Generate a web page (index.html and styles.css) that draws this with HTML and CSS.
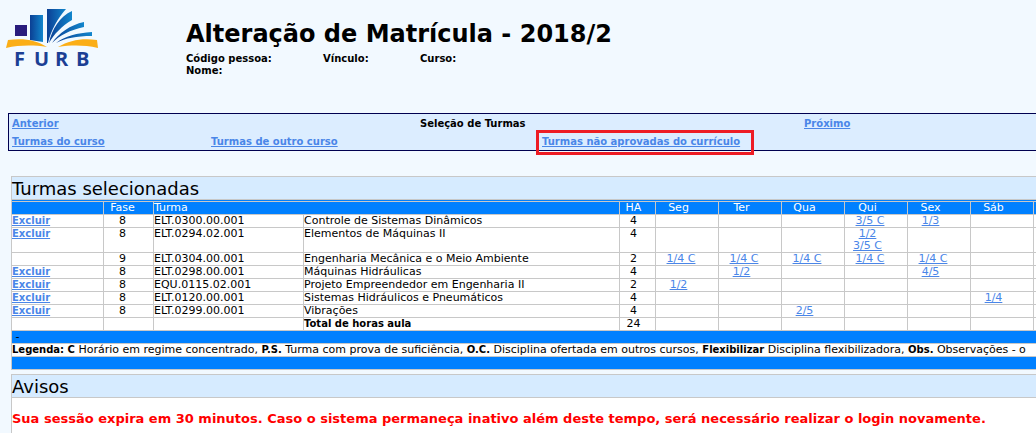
FILE: index.html
```html
<!DOCTYPE html>
<html lang="pt-BR">
<head>
    <meta charset="UTF-8">
    <meta name="viewport" content="width=device-width, initial-scale=1.0">
    <title>Alteração de Matrícula</title>
    <link rel="stylesheet" href="styles.css">
</head>
<body>
    <header class="header">
        <svg class="logo" viewBox="0 0 96 60" role="img" aria-label="FURB">
            <defs>
                <linearGradient id="azul" x1="0" y1="0" x2="1" y2="0">
                    <stop offset="0" stop-color="#0b3f94"/>
                    <stop offset="1" stop-color="#1286cc"/>
                </linearGradient>
            </defs>
            <path d="M9 17h12v11H9z" fill="#291c7c"/>
            <path d="M24 7h13v27l-13-2z" fill="url(#azul)"/>
            <path d="M41 1h19C52 10 45 22 42 35h-1z" fill="url(#azul)"/>
            <path d="M43 35C46 21 54 8 66 3v9C56 18 48 26 43 35z" fill="url(#azul)"/>
            <path d="M46 35C53 25 64 17 78 14v5C64 22 54 27 46 35z" fill="url(#azul)"/>
            <path d="M50 35C59 28 71 25 86 24v4C70 28 60 30 50 35z" fill="url(#azul)"/>
            <path d="M2 32C18 30 30 32 41 39C27 37 14 37 0 40z" fill="#fbae17"/>
            <path d="M52 39C64 32 76 30 91 32l1 8C78 37 66 37 52 39z" fill="#fbae17"/>
            <g class="logo-text">
                <text x="8" y="58">F</text>
                <text x="28" y="58">U</text>
                <text x="49" y="58">R</text>
                <text x="70" y="58">B</text>
            </g>
        </svg>
        <div class="info">
            <h1>Alteração de Matrícula - 2018/2</h1>
            <div class="info-row">
                <span class="codigo">Código pessoa:</span>
                <span class="vinculo">Vínculo:</span>
                <span>Curso:</span>
            </div>
            <div>Nome:</div>
        </div>
    </header>

    <nav class="menu">
        <div class="menu-row steps">
            <a href="#">Anterior</a>
            <span>Seleção de Turmas</span>
            <a href="#">Próximo</a>
        </div>
        <div class="menu-row options">
            <a href="#">Turmas do curso</a>
            <a href="#">Turmas de outro curso</a>
            <a href="#" class="highlight">Turmas não aprovadas do currículo</a>
        </div>
    </nav>

    <main>
        <section class="box">
            <h2>Turmas selecionadas</h2>
            <table class="turmas">
                <colgroup>
                    <col class="col-acao">
                    <col class="col-fase">
                    <col class="col-turma">
                    <col>
                    <col class="col-ha">
                    <col class="col-dia" span="7">
                </colgroup>
                <thead>
                    <tr>
                        <th></th>
                        <th class="fase">Fase</th>
                        <th colspan="2">Turma</th>
                        <th class="ha">HA</th>
                        <th class="dia">Seg</th>
                        <th class="dia">Ter</th>
                        <th class="dia">Qua</th>
                        <th class="dia">Qui</th>
                        <th class="dia">Sex</th>
                        <th class="dia">Sáb</th>
                        <th></th>
                    </tr>
                </thead>
                <tbody>
                    <tr>
                        <td><a href="#" class="excluir">Excluir</a></td>
                        <td class="fase">8</td>
                        <td>ELT.0300.00.001</td>
                        <td>Controle de Sistemas Dinâmicos</td>
                        <td class="ha">4</td>
                        <td></td><td></td><td></td>
                        <td class="dia conc"><a href="#">3/5 C</a></td>
                        <td class="dia"><a href="#">1/3</a></td>
                        <td></td><td></td>
                    </tr>
                    <tr>
                        <td><a href="#" class="excluir">Excluir</a></td>
                        <td class="fase">8</td>
                        <td>ELT.0294.02.001</td>
                        <td>Elementos de Máquinas II</td>
                        <td class="ha">4</td>
                        <td></td><td></td><td></td>
                        <td class="dia"><a href="#">1/2</a><br><a href="#">3/5 C</a></td>
                        <td></td><td></td><td></td>
                    </tr>
                    <tr>
                        <td></td>
                        <td class="fase">9</td>
                        <td>ELT.0304.00.001</td>
                        <td>Engenharia Mecânica e o Meio Ambiente</td>
                        <td class="ha">2</td>
                        <td class="dia conc"><a href="#">1/4 C</a></td>
                        <td class="dia conc"><a href="#">1/4 C</a></td>
                        <td class="dia conc"><a href="#">1/4 C</a></td>
                        <td class="dia conc"><a href="#">1/4 C</a></td>
                        <td class="dia conc"><a href="#">1/4 C</a></td>
                        <td></td><td></td>
                    </tr>
                    <tr>
                        <td><a href="#" class="excluir">Excluir</a></td>
                        <td class="fase">8</td>
                        <td>ELT.0298.00.001</td>
                        <td>Máquinas Hidráulicas</td>
                        <td class="ha">4</td>
                        <td></td>
                        <td class="dia"><a href="#">1/2</a></td>
                        <td></td><td></td>
                        <td class="dia"><a href="#">4/5</a></td>
                        <td></td><td></td>
                    </tr>
                    <tr>
                        <td><a href="#" class="excluir">Excluir</a></td>
                        <td class="fase">8</td>
                        <td>EQU.0115.02.001</td>
                        <td>Projeto Empreendedor em Engenharia II</td>
                        <td class="ha">2</td>
                        <td class="dia"><a href="#">1/2</a></td>
                        <td></td><td></td><td></td><td></td><td></td><td></td>
                    </tr>
                    <tr>
                        <td><a href="#" class="excluir">Excluir</a></td>
                        <td class="fase">8</td>
                        <td>ELT.0120.00.001</td>
                        <td>Sistemas Hidráulicos e Pneumáticos</td>
                        <td class="ha">4</td>
                        <td></td><td></td><td></td><td></td><td></td>
                        <td class="dia"><a href="#">1/4</a></td>
                        <td></td>
                    </tr>
                    <tr>
                        <td><a href="#" class="excluir">Excluir</a></td>
                        <td class="fase">8</td>
                        <td>ELT.0299.00.001</td>
                        <td>Vibrações</td>
                        <td class="ha">4</td>
                        <td></td><td></td>
                        <td class="dia"><a href="#">2/5</a></td>
                        <td></td><td></td><td></td><td></td>
                    </tr>
                    <tr>
                        <td></td><td></td><td></td>
                        <td><b>Total de horas aula</b></td>
                        <td class="ha">24</td>
                        <td></td><td></td><td></td><td></td><td></td><td></td><td></td>
                    </tr>
                    <tr class="faixa"><td colspan="12">&nbsp;-</td></tr>
                    <tr><td colspan="12"><b>Legenda: C</b> Horário em regime concentrado, <b>P.S.</b> Turma com prova de suficiência, <b>O.C.</b> Disciplina ofertada em outros cursos, <b>Flexibilizar</b> Disciplina flexibilizadora, <b>Obs.</b> Observações - o</td></tr>
                    <tr class="faixa"><td colspan="12"></td></tr>
                </tbody>
            </table>
        </section>

        <section class="box avisos">
            <h2>Avisos</h2>
            <p>Sua sessão expira em 30 minutos. Caso o sistema permaneça inativo além deste tempo, será necessário realizar o login novamente.</p>
        </section>
    </main>
</body>
</html>
```
FILE: styles.css
```css
* {
    margin: 0;
    padding: 0;
    box-sizing: border-box;
}

body {
    min-height: 100vh;
    display: flex;
    flex-direction: column;
    background-color: #f2f9ff;
    color: #000;
    font-family: Verdana, "DejaVu Sans", sans-serif;
    font-size: 10px;
    line-height: 12px;
    overflow: hidden;
}

a {
    color: #4a86e8;
}

.header {
    display: flex;
    gap: 84px;
    height: 113px;
    padding: 8px 6px;
    font-weight: bold;
}

.logo {
    width: 96px;
    height: 60px;
    overflow: visible;
}

.logo-text {
    font-family: "Open Sans", sans-serif;
    font-size: 20px;
    font-weight: bold;
    fill: #1c3f94;
}

.info h1 {
    padding-top: 8px;
    font-size: 24px;
    line-height: 37px;
}

.info-row {
    display: flex;
}

.codigo {
    width: 137px;
}

.vinculo {
    width: 97px;
}

/* the page is wider than the window */
.menu,
main {
    width: calc(100% + 61px);
}

.menu {
    margin-left: 8px;
    border: 1px solid #000050;
    background-color: #dcedff;
    font-weight: bold;
}

.menu-row {
    display: grid;
    padding: 2px 0 0 3px;
    line-height: 16px;
}

.menu-row > * {
    justify-self: start;
}

.steps {
    grid-template-columns: 408fr 384fr 300fr;
}

.options {
    grid-template-columns: 199fr 331fr 562fr;
}

.highlight {
    position: relative;
}

.highlight::after {
    content: "";
    position: absolute;
    inset: -4px -14px;
    left: -6px;
    bottom: -5px;
    border: 3px solid #ed1c24;
}

main {
    flex: 1;
    display: flex;
    flex-direction: column;
    gap: 4px;
    padding: 25px 0 0 11px;
}

.box {
    border: 1px solid #c8c8c8;
    background-color: #fff;
}

.box h2 {
    padding-top: 2px;
    background-color: #d6ebff;
    font-size: 18px;
    font-weight: normal;
    line-height: 20px;
    border-bottom: 1px solid #c8c8c8;
}

.turmas {
    width: calc(100% + 2px);
    margin: 1px -1px -1px;
    border-collapse: collapse;
    table-layout: fixed;
    font-size: 11px;
}

.turmas b,
.excluir {
    font-size: 10px;
    font-weight: bold;
}

.box:has(.turmas) {
    background-color: #0080ff;
}

.turmas th,
.turmas td {
    height: 13px;
    border: 1px solid #c8c8c8;
    font-weight: normal;
    text-align: left;
    vertical-align: top;
    white-space: nowrap;
}

.turmas td {
    background-color: #fff;
}

.turmas th,
.turmas .faixa td {
    background-color: #0080ff;
}

.turmas th {
    color: #fff;
}

.col-acao {
    width: 92px;
}

.col-fase {
    width: 50px;
}

.col-turma {
    width: 150px;
}

.col-ha {
    width: 36px;
}

.col-dia {
    width: 63px;
}

.turmas .fase {
    padding-right: 12px;
    text-align: center;
}

.turmas .ha {
    padding-right: 8px;
    text-align: center;
}

.turmas .dia {
    padding-right: 17px;
    text-align: center;
}

.turmas .conc {
    padding-right: 12px;
}

.avisos {
    flex: 1;
    border-bottom: none;
}

.avisos p {
    padding-top: 12px;
    color: #f00;
    font-size: 13px;
    font-weight: bold;
    line-height: 18px;
}
```
